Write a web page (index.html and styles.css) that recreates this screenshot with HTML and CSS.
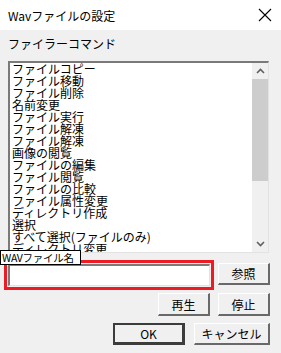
FILE: index.html
```html
<!DOCTYPE html>
<html lang="ja">
<head>
    <meta charset="UTF-8">
    <title>Wavファイルの設定</title>
    <link rel="stylesheet" href="styles.css">
</head>
<body>
<div class="window">
    <div class="titlebar">
        <span class="title">Wavファイルの設定</span>
        <svg class="close" width="14" height="14" viewBox="0 0 14 14">
            <path d="M1 1 L13 13 M13 1 L1 13" stroke="#000" stroke-width="1.1" fill="none"/>
        </svg>
    </div>
    <div class="content">
        <div class="groupLabel">ファイラーコマンド</div>
        <div class="listbox">
            <div class="listItems">
                <div>ファイルコピー</div>
                <div>ファイル移動</div>
                <div>ファイル削除</div>
                <div>名前変更</div>
                <div>ファイル実行</div>
                <div>ファイル解凍</div>
                <div>ファイル解凍</div>
                <div>画像の閲覧</div>
                <div>ファイルの編集</div>
                <div>ファイル閲覧</div>
                <div>ファイルの比較</div>
                <div>ファイル属性変更</div>
                <div>ディレクトリ作成</div>
                <div>選択</div>
                <div>すべて選択(ファイルのみ)</div>
                <div>ディレクトリ変更</div>
            </div>
            <div class="scrollbar">
                <div class="arrow">
                    <svg width="9" height="6" viewBox="0 0 9 6"><path d="M1 5 L4.5 1.5 L8 5" stroke="#606060" stroke-width="1.6" fill="none"/></svg>
                </div>
                <div class="track">
                    <div class="thumb"></div>
                </div>
                <div class="arrow">
                    <svg width="9" height="6" viewBox="0 0 9 6"><path d="M1 1 L4.5 4.5 L8 1" stroke="#606060" stroke-width="1.6" fill="none"/></svg>
                </div>
            </div>
        </div>
        <div class="row fileRow">
            <input class="fileInput" type="text">
            <button class="btn refBtn">参照</button>
        </div>
        <div class="row">
            <button class="btn">再生</button>
            <button class="btn">停止</button>
        </div>
        <div class="row">
            <button class="btn okBtn">OK</button>
            <button class="btn cancelBtn">キャンセル</button>
        </div>
    </div>
    <div class="tooltip">WAVファイル名</div>
</div>
</body>
</html>
```
FILE: styles.css
```css
body {
    margin: 0;
    padding: 0;
    font-family: "Noto Sans CJK JP", "DejaVu Sans", sans-serif;
}
.window {
    position: relative;
    width: 281px;
    height: 353px;
    background-color: #F0F0F0;
    overflow: hidden;
}
.titlebar {
    height: 30px;
    background-color: #FFF;
    display: flex;
    align-items: center;
    justify-content: space-between;
    padding: 0 9px 0 8px;
    box-sizing: border-box;
}
.title {
    font-size: 12px;
    color: #000;
}
.content {
    padding: 6px 11px 0 8px;
}
.groupLabel {
    font-size: 12px;
    line-height: 16px;
    margin-bottom: 9px;
}
.listbox {
    display: flex;
    height: 192px;
    margin-right: 1px;
    background-color: #FFF;
    box-sizing: border-box;
    border-top: 2px solid #7A7A7A;
    border-left: 2px solid #7A7A7A;
    border-right: 1px solid #E3E3E3;
    border-bottom: 1px solid #E3E3E3;
}
.listItems {
    flex-grow: 1;
    overflow: hidden;
    padding: 0 0 0 2px;
    font-size: 12px;
    line-height: 12px;
    color: #000;
    white-space: nowrap;
}
.scrollbar {
    width: 16px;
    display: flex;
    flex-direction: column;
    background-color: #F0F0F0;
}
.arrow {
    height: 16px;
    display: flex;
    align-items: center;
    justify-content: center;
}
.track {
    flex-grow: 1;
}
.thumb {
    height: 102px;
    background-color: #CDCDCD;
}
.row {
    display: flex;
    justify-content: flex-end;
    gap: 8px;
    margin-top: 7px;
}
.fileRow {
    margin-top: 11px;
    justify-content: space-between;
}
.fileInput {
    width: 202px;
    height: 22px;
    box-sizing: border-box;
    margin: 0;
    background-color: #FFF;
    border-top: 2px solid #7A7A7A;
    border-left: 2px solid #7A7A7A;
    border-right: 1px solid #E3E3E3;
    border-bottom: 1px solid #E3E3E3;
    outline: 3px solid #ED1C24;
    outline-offset: 1px;
}
.btn {
    width: 52px;
    height: 23px;
    padding: 0;
    background-color: #F0F0F0;
    font-family: "Noto Sans CJK JP", "DejaVu Sans", sans-serif;
    font-size: 12px;
    color: #000;
    border-top: 1px solid #FFF;
    border-left: 1px solid #FFF;
    border-right: 2px solid #696969;
    border-bottom: 2px solid #696969;
    box-sizing: border-box;
}
.refBtn {
    height: 22px;
    margin-top: -1px;
}
.okBtn {
    width: 72px;
    height: 22px;
    margin-right: 1px;
    border: 2px solid #3C3C3C;
    border-right-width: 3px;
    border-bottom-width: 3px;
}
.cancelBtn {
    width: 76px;
    height: 22px;
}
.tooltip {
    position: absolute;
    left: 0;
    top: 250px;
    width: 81px;
    height: 15px;
    box-sizing: border-box;
    border: 1px solid #000;
    background-color: #FFF;
    font-size: 10.5px;
    line-height: 13px;
    letter-spacing: -0.3px;
    padding-left: 1px;
    white-space: nowrap;
}
```
